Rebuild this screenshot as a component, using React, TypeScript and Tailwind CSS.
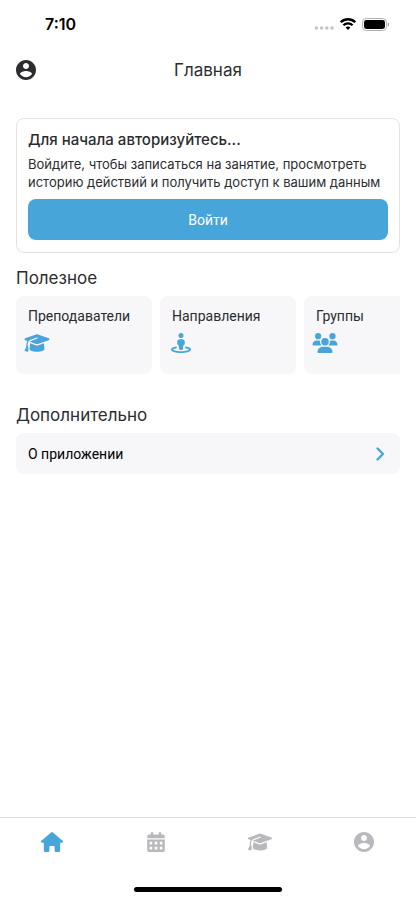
import React from 'react';
import { FaGraduationCap, FaStreetView, FaUsers } from 'react-icons/fa6';

const AccountIcon = ({ className }: { className?: string }) => <svg viewBox="2 2 20 20" fill="currentColor" className={className} aria-hidden="true">
    <path d="M12 2C6.48 2 2 6.48 2 12s4.48 10 10 10 10-4.48 10-10S17.52 2 12 2zm0 3c1.66 0 3 1.34 3 3s-1.34 3-3 3-3-1.34-3-3 1.34-3 3-3zm0 14.2c-2.5 0-4.71-1.28-6-3.22.03-1.99 4-3.08 6-3.08 1.99 0 5.97 1.09 6 3.08-1.29 1.94-3.5 3.22-6 3.22z" />
  </svg>;

const HomeIcon = ({ className }: { className?: string }) => <svg viewBox="0 0 22 20" fill="currentColor" className={className} aria-hidden="true">
    <path d="M10.1.4a1.4 1.4 0 0 1 1.8 0l9.7 8.4c.9.8.4 2-.8 2h-1.6v7.4c0 1-.8 1.8-1.8 1.8h-2.2c-.9 0-1.6-.7-1.6-1.6v-3.7a.7.7 0 0 0-.7-.7H9.1a.7.7 0 0 0-.7.7v3.7c0 .9-.7 1.6-1.6 1.6H4.6c-1 0-1.8-.8-1.8-1.8v-7.4H1.2c-1.200 0-1.700-1.200-.8-2z" />
  </svg>;

const CalendarIcon = ({ className }: { className?: string }) => <svg viewBox="0 0 18 20" fill="currentColor" className={className} aria-hidden="true">
    <rect x="3.8" width="2.4" height="5" rx="1.2" />
    <rect x="11.8" width="2.4" height="5" rx="1.2" />
    <path d="M2 2.5h14c1 0 1.8.8 1.8 1.8v2H.2v-2c0-1 .8-1.8 1.8-1.8z" />
    <path fillRule="evenodd" d="M.2 7.5h17.600v10.700c0 1-.8 1.800-1.800 1.800H2c-1 0-1.800-.8-1.800-1.800z M2.600 9.800v2.600h2.600V9.800z M7.700 9.800v2.600h2.600V9.800z M12.800 9.800v2.600h2.600V9.800z M2.600 14.800v2.600h2.600v-2.600z M7.700 14.800v2.600h2.600v-2.600z M12.800 14.800v2.600h2.600v-2.600z" />
  </svg>;

const ChevronIcon = ({ className }: { className?: string }) => <svg viewBox="0 0 16 16" fill="none" stroke="currentColor" strokeWidth="2.4" strokeLinecap="round" strokeLinejoin="round" className={className} aria-hidden="true">
    <path d="M5.5 2.5 11 8l-5.500 5.500" />
  </svg>;

const usefulLinks = [{
  title: 'Преподаватели',
  icon: FaGraduationCap
}, {
  title: 'Направления',
  icon: FaStreetView
}, {
  title: 'Группы',
  icon: FaUsers
}];

const tabs = [{
  label: 'Главная',
  icon: HomeIcon,
  size: 'h-5 w-[22px]',
  active: true
}, {
  label: 'Расписание',
  icon: CalendarIcon,
  size: 'h-5 w-[18px]',
  active: false
}, {
  label: 'Преподаватели',
  icon: FaGraduationCap,
  size: 'h-5 w-6',
  active: false
}, {
  label: 'Профиль',
  icon: AccountIcon,
  size: 'h-5 w-5',
  active: false
}];

const StatusBar = () => <div className="flex h-12 items-center justify-between pl-[45px] pr-[27px] text-black">
    <span className="text-base font-semibold">7:10</span>
    <div className="flex items-center gap-[6px]">
      <svg viewBox="0 0 20 12" className="h-3 w-5" fill="#c4c4c6" aria-hidden="true">
        <circle cx="2.4" cy="10" r="1.8" />
        <circle cx="7.6" cy="10" r="1.8" />
        <circle cx="12.8" cy="10" r="1.8" />
        <circle cx="18" cy="10" r="1.8" />
      </svg>
      <svg viewBox="0 0 16 12" className="h-3 w-4" fill="none" stroke="currentColor" aria-hidden="true">
        <path d="M.8 4.2a10.2 10.2 0 0 1 14.4 0" strokeWidth="2.4" />
        <path d="M3.4 7.2a6.5 6.5 0 0 1 9.2 0" strokeWidth="2.3" />
        <path d="M8 12 5.6 9.6a3.5 3.5 0 0 1 4.8 0z" fill="currentColor" stroke="none" />
      </svg>
      <svg viewBox="0 0 27 13" className="h-[13px] w-[27px]" aria-hidden="true">
        <rect x="0.5" y="0.5" width="24" height="12" rx="3.8" fill="none" stroke="#b0b0b0" />
        <rect x="2" y="2" width="21" height="9" rx="2.4" fill="#000" />
        <path d="M25.8 4.6c.7.3 1.1 1 1.1 1.9s-.4 1.6-1.1 1.9z" fill="#8e8e93" />
      </svg>
    </div>
  </div>;

const App = () => {
  return <div className="flex min-h-screen flex-col bg-white font-['Inter','Noto_Sans',sans-serif] text-[#2c2c30]">
      <StatusBar />
      <header className="grid h-11 grid-cols-[20px_1fr_20px] items-center px-4">
        <button aria-label="Профиль">
          <AccountIcon className="h-5 w-5" />
        </button>
        <h1 className="text-center text-[17px] leading-7">Главная</h1>
      </header>
      <main className="flex-1 px-4 pt-[26px]">
        <section className="rounded-lg border border-[#e2e2e4] px-[11px] pt-[11px] pb-3">
          <h2 className="text-[15px] leading-5 font-medium">Для начала авторизуйтесь...</h2>
          <p className="mt-[5px] text-[13px] leading-[18px]">
            Войдите, чтобы записаться на занятие, просмотреть историю действий и получить доступ к вашим данным
          </p>
          <button className="mt-2 h-[41px] w-full rounded-lg bg-[#47a5d9] font-['Roboto','Noto_Sans',sans-serif] text-sm text-white">
            Войти
          </button>
        </section>
        <section>
          <h2 className="mt-[11px] text-[17px] leading-7">Полезное</h2>
          <div className="mt-1 flex gap-2 overflow-hidden">
            {usefulLinks.map(link => <a key={link.title} href="#" className="h-[78px] w-[136px] shrink-0 rounded-lg bg-[#f7f7fa] px-3 py-[10px] font-['Roboto','Noto_Sans',sans-serif]">
                <span className="block text-sm leading-5">{link.title}</span>
                <link.icon className="mt-[7px] -ml-1 h-5 w-[26px] text-[#47a5d9]" />
              </a>)}
          </div>
        </section>
        <section>
          <h2 className="mt-[27px] text-[17px] leading-7">Дополнительно</h2>
          <a href="#" className="mt-1 flex h-[41px] items-center justify-between rounded-lg bg-[#f7f7fa] px-3 font-['Roboto','Noto_Sans',sans-serif] text-sm text-black">
            О приложении
            <ChevronIcon className="h-4 w-4 text-[#47a5d9]" />
          </a>
        </section>
      </main>
      <nav className="border-t border-[#dedee0]">
        <div className="grid h-12 grid-cols-4">
          {tabs.map(tab => <button key={tab.label} aria-label={tab.label} className={`flex items-center justify-center ${tab.active ? 'text-[#47a5d9]' : 'text-[#b9b9bd]'}`}>
              <tab.icon className={tab.size} />
            </button>)}
        </div>
        <div className="flex h-[34px] items-end justify-center pb-2">
          <div className="h-[5px] w-[148px] rounded-full bg-black" />
        </div>
      </nav>
    </div>;
};
export default App;
